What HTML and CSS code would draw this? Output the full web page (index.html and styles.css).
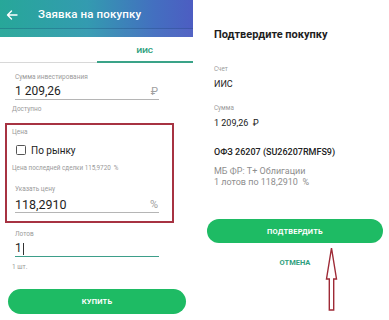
FILE: index.html
```html
<!DOCTYPE html>
<html lang="ru">
<head>
<meta charset="utf-8">
<link rel="stylesheet" href="styles.css">
</head>
<body>
<div class="screen">
  <section class="left">
    <header class="appbar">
      <div class="appbar-row">
        <svg class="back" width="12" height="10" viewBox="0 0 12 10"><path d="M11 5H1.5M5.5 1L1.5 5l4 4" fill="none" stroke="#fff" stroke-width="1.4" stroke-linecap="round" stroke-linejoin="round"/></svg>
        <span class="title">Заявка на покупку</span>
      </div>
      <div class="appbar-strip"></div>
    </header>
    <nav class="tabs">
      <div class="tab"></div>
      <div class="tab active">ИИС</div>
    </nav>
    <div class="label l-first">Сумма инвестирования</div>
    <div class="field"><span class="val">1 209,26</span><span class="unit">₽</span></div>
    <div class="hint h-avail">Доступно</div>

    <div class="pricebox">
      <div class="hint h-price">Цена</div>
      <label class="check-row"><span class="checkbox"></span><span>По рынку</span></label>
      <div class="hint h-last">Цена последней сделки 115,9720 &nbsp;%</div>
      <div class="label l-price">Указать цену</div>
      <div class="field f-price"><span class="val">118,2910</span><span class="unit">%</span></div>
    </div>

    <div class="label l-lots">Лотов</div>
    <div class="field f-lots"><span class="val">1</span><span class="cursor"></span></div>
    <div class="hint h-pcs">1 шт.</div>
    <button class="btn btn-buy">КУПИТЬ</button>
  </section>

  <section class="right">
    <h1 class="confirm-title">Подтвердите покупку</h1>
    <div class="r-label r-acc">Счет</div>
    <div class="r-val">ИИС</div>
    <div class="r-label r-sum">Сумма</div>
    <div class="r-val">1 209,26 &nbsp;₽</div>
    <div class="r-bond">ОФЗ 26207 (SU26207RMFS9)</div>
    <div class="r-sub r-sub1">МБ ФР: T+ Облигации</div>
    <div class="r-sub">1 лотов по 118,2910 &nbsp;%</div>
    <button class="btn btn-confirm">ПОДТВЕРДИТЬ</button>
    <div class="cancel">ОТМЕНА</div>
    <svg class="arrow" width="14" height="66" viewBox="0 0 14 66"><path d="M6.5 2L11.5 33H8.7V64H4.3V33H1.5Z" fill="#fff" stroke="#9e2a36" stroke-width="1.4" stroke-linejoin="miter"/></svg>
  </section>
</div>
</body>
</html>
```

FILE: styles.css
```css
* { box-sizing: border-box; margin: 0; padding: 0; }
html, body { width: 389px; height: 320px; overflow: hidden; background: #fff; }
body { font-family: Roboto, "Noto Sans", Arial, sans-serif; color: #222; }

.screen { display: flex; width: 389px; height: 320px; }

.left { width: 193px; display: flex; flex-direction: column; background: #fff; }

.appbar { height: 37px; background: linear-gradient(90deg, #27a799 0%, #339bb0 45%, #436fc0 80%, #4d5dc2 100%); display: flex; flex-direction: column; }
.appbar-row { height: 28px; display: flex; align-items: center; padding-left: 6px; }
.back { margin-top: 1px; }
.title { color: #fff; font-size: 11.5px; font-weight: 500; margin-left: 20px; letter-spacing: 0.15px; }
.appbar-strip { flex: 1; border-top: 1px solid rgba(0,40,90,0.25); background: rgba(255,255,255,0.04); }

.tabs { height: 26px; display: flex; border-bottom: 1px solid #d8d8d8; }
.tab { flex: 1; display: flex; align-items: center; justify-content: center; font-size: 8px; font-weight: 700; color: #2f9f7e; }
.tab.active { border-bottom: 2px solid #3aa388; margin-bottom: -1px; padding-top: 2px; }

.label, .hint { font-size: 6.5px; line-height: 10px; color: #9a9a9a; }
.label { padding-left: 15px; }
.hint { padding-left: 12px; }
.l-first { margin-top: 9px; }

.field { margin-left: 15px; width: 144px; height: 16px; display: flex; align-items: center; justify-content: space-between; border-bottom: 1px solid #b5b5b5; margin-top: 2px; }
.val { font-size: 12px; color: #1e1e1e; line-height: 15px; }
.unit { font-size: 11px; color: #a0a0a0; margin-right: 1px; }
.h-avail { margin-top: 4px; }

.pricebox { margin: 9px 0 0 5px; width: 169px; border: 2px solid #a73342; padding: 2px 0 8px 0; }
.pricebox .hint { padding-left: 5px; }
.pricebox .label { padding-left: 8px; }
.pricebox .field { margin-left: 8px; }
.check-row { display: flex; align-items: center; height: 12px; margin-top: 7px; padding-left: 9px; font-size: 10px; color: #222; }
.checkbox { width: 10px; height: 10px; border: 1.5px solid #555; border-radius: 1.5px; margin-right: 5px; }
.h-last { margin-top: 7px; font-size: 6.3px; }
.l-price { margin-top: 11px; }
.f-price { margin-top: 3px; }
.f-price .val { font-size: 12.5px; }

.l-lots { margin-top: 6px; }
.f-lots { justify-content: flex-start; border-bottom: 1.5px solid #3d9e8a; }
.cursor { width: 1px; height: 12px; background: #333; margin-left: 1px; }
.h-pcs { margin-top: 5px; }

.btn { border: none; border-radius: 13px; background: #1ebb64; color: #fff; font-family: inherit; font-size: 7.5px; font-weight: 700; letter-spacing: 0.2px; display: flex; align-items: center; justify-content: center; }
.btn-buy { margin: 17px 0 0 8px; width: 178px; height: 25px; }

.right { flex: 1; position: relative; padding-left: 21px; display: flex; flex-direction: column; }
.confirm-title { font-size: 11px; font-weight: 700; color: #1e1e1e; margin-top: 28px; line-height: 14px; }
.r-label { font-size: 6.3px; color: #9a9a9a; line-height: 10px; }
.r-acc { margin-top: 22px; }
.r-sum { margin-top: 13px; }
.r-val { font-size: 9px; color: #222; line-height: 12px; margin-top: 4px; }
.r-bond { font-size: 9px; font-weight: 500; color: #222; line-height: 12px; margin-top: 17px; }
.r-sub { font-size: 9px; color: #8e8e8e; line-height: 11px; }
.r-sub1 { margin-top: 8px; }
.btn-confirm { margin: 31px 0 0 -7px; width: 176px; height: 24px; }
.cancel { margin-left: -7px; width: 176px; text-align: center; font-size: 7.5px; font-weight: 700; color: #2f9f7e; margin-top: 15px; line-height: 10px; }
.arrow { position: absolute; left: 132px; top: 246px; }
```
